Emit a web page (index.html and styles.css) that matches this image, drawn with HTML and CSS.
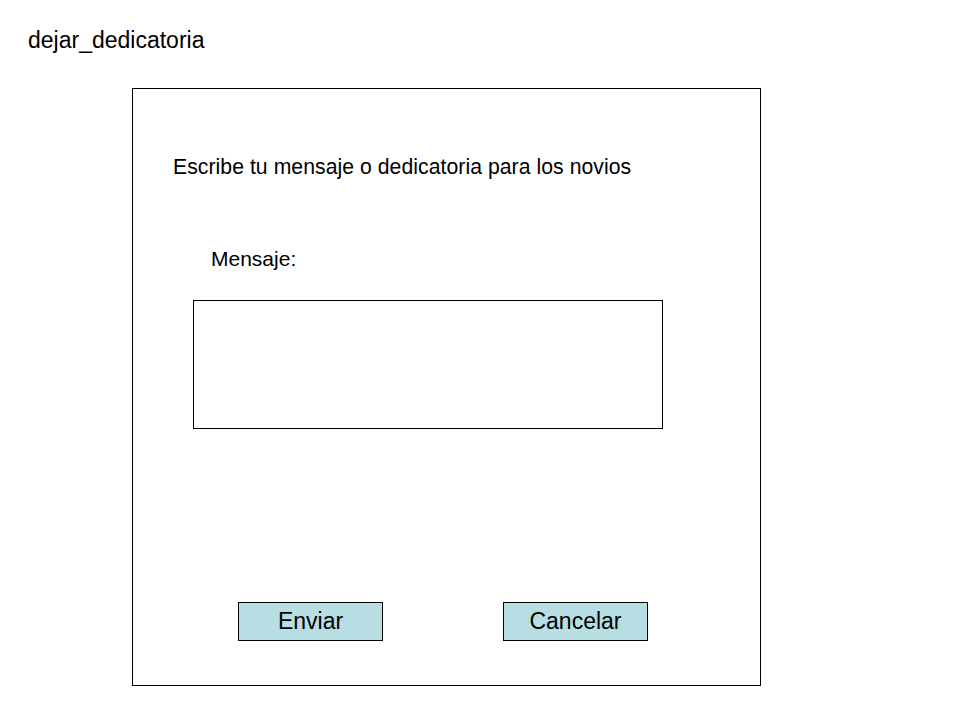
FILE: index.html
```html
<!DOCTYPE html>
<html lang="es">
<head>
    <meta charset="UTF-8">
    <title>dejar_dedicatoria</title>
    <link rel="stylesheet" href="styles.css">
</head>
<body>
    <h1 class="page-title">dejar_dedicatoria</h1>

    <!-- marco de la pantalla -->
    <div class="screen">
        <p class="intro">Escribe tu mensaje o dedicatoria para los novios</p>
        <label class="msg-label" for="mensaje">Mensaje:</label>
        <textarea id="mensaje" class="msg-box"></textarea>
        <div class="actions">
            <button class="btn" type="button">Enviar</button>
            <button class="btn" type="button">Cancelar</button>
        </div>
    </div>
</body>
</html>
```

FILE: styles.css
```css
body { margin: 0; background: #fff; font-family: "Liberation Sans", Arial, sans-serif; color: #000; }
.page-title { margin: 0; padding: 27px 0 0 28px; font-size: 23px; font-weight: normal; line-height: 26px; height: 35px; }
.screen { box-sizing: border-box; width: 629px; height: 598px; margin: 26px 0 0 132px; border: 1px solid #000; display: flex; flex-direction: column; }
.intro { margin: 66px 0 0 40px; font-size: 21.2px; letter-spacing: 0.05px; line-height: 24px; }
.msg-label { display: block; margin: 68px 0 0 78px; font-size: 21px; line-height: 24px; }
.msg-box { box-sizing: border-box; width: 470px; height: 129px; margin: 29px 0 0 60px; border: 1px solid #000; resize: none; padding: 0; font: inherit; }
.actions { display: flex; gap: 120px; margin: 173px 0 0 105px; }
.btn { box-sizing: border-box; width: 145px; height: 39px; background: #b7dee2; border: 1px solid #000; border-radius: 0; padding: 0; font-family: "Liberation Sans", Arial, sans-serif; font-size: 23px; color: #000; }
```
